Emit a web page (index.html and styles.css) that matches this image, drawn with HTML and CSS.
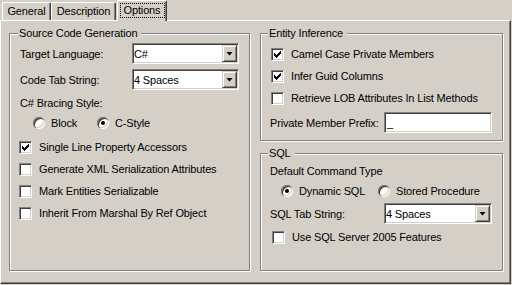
FILE: index.html
```html
<!DOCTYPE html>
<html>
<head>
  <title>Options</title>
  <link rel="stylesheet" href="styles.css">
</head>
<body>
  <div class="dialog">
    <div class="tabs">
      <div class="tab general">General</div>
      <div class="tab description">Description</div>
      <div class="tab active"><span class="focus">Options</span></div>
    </div>

    <div class="panel">
      <fieldset class="group source">
        <legend>Source Code Generation</legend>
        <div class="field first">
          <span>Target Language:</span>
          <div class="combo"><span class="value">C#</span><span class="drop"><i></i></span></div>
        </div>
        <div class="field second">
          <span>Code Tab String:</span>
          <div class="combo"><span class="value">4 Spaces</span><span class="drop"><i></i></span></div>
        </div>
        <div class="row caption">C# Bracing Style:</div>
        <div class="radios bracing">
          <label class="option block"><span class="radio"></span>Block</label>
          <label class="option"><span class="radio checked"></span>C-Style</label>
        </div>
        <div class="checks">
          <label class="row"><span class="check on"><svg width="11" height="11"><path d="M2 4h1v3h-1zM3 5h1v3h-1zM4 6h1v3h-1zM5 5h1v3h-1zM6 4h1v3h-1zM7 3h1v3h-1zM8 2h1v3h-1z"/></svg></span>Single Line Property Accessors</label>
          <label class="row"><span class="check"></span>Generate XML Serialization Attributes</label>
          <label class="row"><span class="check"></span>Mark Entities Serializable</label>
          <label class="row"><span class="check"></span>Inherit From Marshal By Ref Object</label>
        </div>
      </fieldset>

      <div class="right">
        <fieldset class="group entity">
          <legend>Entity Inference</legend>
          <div class="checks top">
            <label class="row"><span class="check on"><svg width="11" height="11"><path d="M2 4h1v3h-1zM3 5h1v3h-1zM4 6h1v3h-1zM5 5h1v3h-1zM6 4h1v3h-1zM7 3h1v3h-1zM8 2h1v3h-1z"/></svg></span>Camel Case Private Members</label>
            <label class="row"><span class="check on"><svg width="11" height="11"><path d="M2 4h1v3h-1zM3 5h1v3h-1zM4 6h1v3h-1zM5 5h1v3h-1zM6 4h1v3h-1zM7 3h1v3h-1zM8 2h1v3h-1z"/></svg></span>Infer Guid Columns</label>
            <label class="row"><span class="check"></span>Retrieve LOB Attributes In List Methods</label>
          </div>
          <div class="field prefix">
            <span>Private Member Prefix:</span>
            <div class="textbox">_</div>
          </div>
        </fieldset>

        <fieldset class="group sql">
          <legend>SQL</legend>
          <div class="row caption">Default Command Type</div>
          <div class="radios command">
            <label class="option dynamic"><span class="radio checked"></span>Dynamic SQL</label>
            <label class="option"><span class="radio"></span>Stored Procedure</label>
          </div>
          <div class="field sqltab">
            <span>SQL Tab String:</span>
            <div class="combo wide"><span class="value">4 Spaces</span><span class="drop"><i></i></span></div>
          </div>
          <label class="row server"><span class="check"></span>Use SQL Server 2005 Features</label>
        </fieldset>
      </div>
    </div>
  </div>
</body>
</html>
```

FILE: styles.css
```css
body {
  margin: 0;
  background-color: #d4d0c8;
  font: 11px "Liberation Sans", Arial, sans-serif;
  letter-spacing: -0.15px;
  color: #000;
}
.dialog {
  width: 511px;
}

/* tab strip */
.tabs {
  display: flex;
  align-items: flex-end;
  height: 20px;
  padding-left: 2px;
  position: relative;
  z-index: 1;
}
.tab {
  box-sizing: border-box;
  height: 18px;
  flex: none;
  border-top: 1px solid #fff;
  border-left: 1px solid #fff;
  border-right: 1px solid #404040;
  border-radius: 2px 2px 0 0;
  box-shadow: inset -1px 0 0 #808080;
  display: flex;
  align-items: center;
  justify-content: center;
  line-height: 13px;
}
.tab.general {
  width: 49px;
}
.tab.description {
  width: 65px;
}
.tab.active {
  width: 50px;
  height: 21px;
  margin-left: 1px;
  margin-bottom: -1px;
  padding-bottom: 2px;
  background-color: #d4d0c8;
}
.focus {
  box-sizing: border-box;
  width: 45px;
  height: 15px;
  border: 1px dotted #000;
  text-align: center;
  line-height: 13px;
}

/* page */
.panel {
  box-sizing: border-box;
  width: 511px;
  height: 264px;
  border: 1px solid;
  border-color: #fff #404040 #404040 #fff;
  box-shadow: inset -1px -1px 0 #808080;
  padding: 6px 7px 12px 8px;
  display: flex;
  gap: 10px;
}
.group {
  margin: 0;
  padding: 0 10px;
  min-width: 0;
  border: 1px solid #808080;
  box-shadow: inset 1px 1px 0 #fff, 1px 1px 0 #fff;
}
.group legend {
  margin-left: -2px;
  padding: 0 4px 0 1px;
  line-height: 13px;
  background-color: #d4d0c8;
}
.source {
  box-sizing: border-box;
  width: 241px;
  flex: none;
}
.right {
  width: 243px;
  flex: none;
  display: flex;
  flex-direction: column;
  gap: 6px;
}
.right .group {
  padding: 0 10px 0 9px;
}
.entity {
  padding-bottom: 7px !important;
}
.sql {
  flex: 1;
}

/* rows */
.row {
  display: flex;
  align-items: center;
  height: 22px;
  line-height: 13px;
}
.field {
  display: flex;
  align-items: center;
  justify-content: space-between;
  height: 21px;
}
.field.first {
  margin-top: 3px;
}
.field.second {
  margin-top: 5px;
}
.source .caption {
  margin-top: 2px;
}
.checks.top {
  margin-top: 3px;
}
.source .checks {
  margin-top: 4px;
}
.source .check {
  margin-left: -1px;
}
.entity .check {
  margin-left: 1px;
}
.server .check {
  margin-left: 2px;
}
.field.prefix {
  margin-top: 3px;
}
.field.sqltab {
  margin-top: 3px;
}
.row.server {
  margin-top: 2px;
}

/* combo and text boxes */
.combo,
.textbox {
  box-sizing: border-box;
  width: 107px;
  height: 21px;
  border: 1px solid;
  border-color: #808080 #fff #fff #808080;
  box-shadow: inset 1px 1px 0 #404040, inset -1px -1px 0 #d4d0c8;
  background-color: #fff;
  padding: 1px;
  display: flex;
  align-items: center;
}
.combo.wide,
.textbox {
  width: 108px;
}
.combo .value {
  flex: 1;
}
.textbox {
  padding-left: 2px;
}
.drop {
  box-sizing: border-box;
  width: 15px;
  height: 17px;
  border: 1px solid;
  border-color: #d4d0c8 #404040 #404040 #d4d0c8;
  box-shadow: inset 1px 1px 0 #fff, inset -1px -1px 0 #808080;
  background-color: #d4d0c8;
  display: flex;
  align-items: center;
  justify-content: center;
}
.drop i {
  width: 7px;
  height: 4px;
  background-color: #000;
  clip-path: polygon(0 0, 100% 0, 50% 100%);
}

/* check boxes */
.check {
  box-sizing: border-box;
  width: 13px;
  height: 13px;
  flex: none;
  margin-right: 7px;
  border: 1px solid;
  border-color: #808080 #fff #fff #808080;
  box-shadow: inset 1px 1px 0 #404040, inset -1px -1px 0 #d4d0c8;
  background-color: #fff;
}
.check svg {
  display: block;
  shape-rendering: crispEdges;
}

/* radio buttons */
.radios {
  display: flex;
  align-items: center;
  height: 18px;
}
.bracing {
  padding-left: 13px;
}
.command {
  padding-left: 11px;
}
.option {
  display: flex;
  align-items: center;
}
.option.block {
  width: 64px;
}
.option.dynamic {
  width: 97px;
}
.radio {
  box-sizing: border-box;
  width: 12px;
  height: 12px;
  flex: none;
  margin-right: 6px;
  border-radius: 50%;
  background-color: #fff;
  box-shadow: inset 1px 1px 0 #808080, inset 2px 2px 0 #404040, inset -1px -1px 0 #fff, inset -2px -2px 0 #d4d0c8;
  display: flex;
  align-items: center;
  justify-content: center;
}
.radio.checked::after {
  content: "";
  width: 4px;
  height: 4px;
  border-radius: 50%;
  background-color: #000;
}
```
